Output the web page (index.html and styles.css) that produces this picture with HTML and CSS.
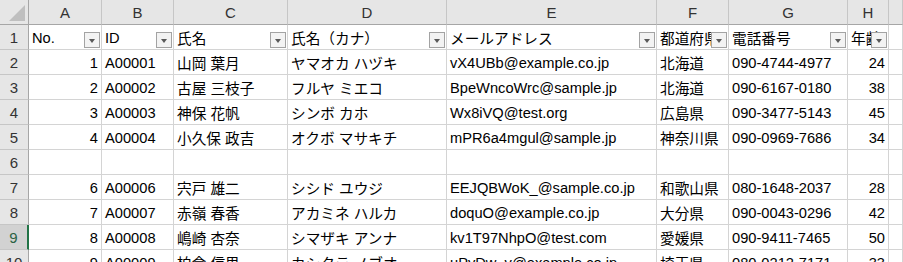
FILE: index.html
```html
<!DOCTYPE html>
<html lang="ja">
<head>
<meta charset="utf-8">
<title>Sheet</title>
<link rel="stylesheet" href="styles.css">
</head>
<body>
<div class="sheet">
  <div class="corner"><svg class="corner-tri" width="29" height="25" viewBox="0 0 29 25"><polygon points="25,5 25,21 9,21" fill="#bfbfbf"/></svg></div>
  <div class="ch">A</div><div class="ch">B</div><div class="ch">C</div><div class="ch">D</div><div class="ch">E</div><div class="ch">F</div><div class="ch">G</div><div class="ch">H</div><div class="ch"></div>

  <div class="rh">1</div>
  <div class="c flt">No.<span class="btn"></span></div>
  <div class="c flt">ID<span class="btn"></span></div>
  <div class="c flt">氏名<span class="btn"></span></div>
  <div class="c flt">氏名（カナ）<span class="btn"></span></div>
  <div class="c flt">メールアドレス<span class="btn"></span></div>
  <div class="c flt">都道府県<span class="btn"></span></div>
  <div class="c flt">電話番号<span class="btn"></span></div>
  <div class="c flt">年齢<span class="btn"></span></div>
  <div class="c"></div>

  <div class="rh">2</div>
  <div class="c num">1</div><div class="c">A00001</div><div class="c">山岡 葉月</div><div class="c">ヤマオカ ハヅキ</div><div class="c">vX4UBb@example.co.jp</div><div class="c">北海道</div><div class="c">090-4744-4977</div><div class="c num">24</div><div class="c"></div>

  <div class="rh">3</div>
  <div class="c num">2</div><div class="c">A00002</div><div class="c">古屋 三枝子</div><div class="c">フルヤ ミエコ</div><div class="c">BpeWncoWrc@sample.jp</div><div class="c">北海道</div><div class="c">090-6167-0180</div><div class="c num">38</div><div class="c"></div>

  <div class="rh">4</div>
  <div class="c num">3</div><div class="c">A00003</div><div class="c">神保 花帆</div><div class="c">シンボ カホ</div><div class="c">Wx8iVQ@test.org</div><div class="c">広島県</div><div class="c">090-3477-5143</div><div class="c num">45</div><div class="c"></div>

  <div class="rh">5</div>
  <div class="c num">4</div><div class="c">A00004</div><div class="c">小久保 政吉</div><div class="c">オクボ マサキチ</div><div class="c">mPR6a4mgul@sample.jp</div><div class="c">神奈川県</div><div class="c">090-0969-7686</div><div class="c num">34</div><div class="c"></div>

  <div class="rh">6</div>
  <div class="c"></div><div class="c"></div><div class="c"></div><div class="c"></div><div class="c"></div><div class="c"></div><div class="c"></div><div class="c"></div><div class="c"></div>

  <div class="rh">7</div>
  <div class="c num">6</div><div class="c">A00006</div><div class="c">宍戸 雄二</div><div class="c">シシド ユウジ</div><div class="c">EEJQBWoK_@sample.co.jp</div><div class="c">和歌山県</div><div class="c">080-1648-2037</div><div class="c num">28</div><div class="c"></div>

  <div class="rh">8</div>
  <div class="c num">7</div><div class="c">A00007</div><div class="c">赤嶺 春香</div><div class="c">アカミネ ハルカ</div><div class="c">doquO@example.co.jp</div><div class="c">大分県</div><div class="c">090-0043-0296</div><div class="c num">42</div><div class="c"></div>

  <div class="rh sel">9</div>
  <div class="c num">8</div><div class="c">A00008</div><div class="c">嶋崎 杏奈</div><div class="c">シマザキ アンナ</div><div class="c">kv1T97NhpO@test.com</div><div class="c">愛媛県</div><div class="c">090-9411-7465</div><div class="c num">50</div><div class="c"></div>

  <div class="rh">10</div>
  <div class="c num">9</div><div class="c">A00009</div><div class="c">柏倉 信男</div><div class="c">カシクラ ノブオ</div><div class="c">uPyDw_v@example.co.jp</div><div class="c">埼玉県</div><div class="c">080-0212-7171</div><div class="c num">33</div><div class="c"></div>
</div>
</body>
</html>
```

FILE: styles.css
```css
html, body {
  margin: 0;
  padding: 0;
  background: #ffffff;
  overflow: hidden;
}

.sheet {
  display: grid;
  grid-template-columns: 29px 73px 72px 114px 159px 210px 72px 119px 41px 1fr;
  grid-auto-rows: 25px;
  width: 903px;
  font-family: "Liberation Sans", "Noto Sans CJK JP", sans-serif;
  font-size: 14.67px;
  color: #000;
}

.corner {
  background: #e6e6e6;
  border-right: 1px solid #a6a6a6;
  border-bottom: 1px solid #a6a6a6;
  box-sizing: border-box;
  position: relative;
}

.corner-tri {
  display: block;
}

.ch {
  background: #e6e6e6;
  border-right: 1px solid #c6c6c6;
  border-bottom: 1px solid #a6a6a6;
  box-sizing: border-box;
  display: flex;
  align-items: center;
  justify-content: center;
  color: #333;
  font-size: 15px;
  padding-top: 1px;
}

.rh {
  background: #e6e6e6;
  border-right: 1px solid #a6a6a6;
  border-bottom: 1px solid #c6c6c6;
  box-sizing: border-box;
  display: flex;
  align-items: center;
  justify-content: center;
  color: #333;
  font-size: 15px;
  padding-top: 1px;
}

.rh.sel {
  background: #d2d2d2;
  border-right: 2px solid #217346;
  color: #2b6244;
}

.c {
  border-right: 1px solid #d4d4d4;
  border-bottom: 1px solid #d4d4d4;
  box-sizing: border-box;
  padding: 1px 3px 0 3px;
  display: flex;
  align-items: center;
  white-space: nowrap;
  overflow: hidden;
  position: relative;
}

.num {
  justify-content: flex-end;
}

.btn {
  position: absolute;
  right: 1px;
  bottom: 1px;
  width: 16px;
  height: 16px;
  box-sizing: border-box;
  border: 1px solid #a3a3a3;
  background: #f3f3f3;
}

.btn::after {
  content: "";
  position: absolute;
  left: 4px;
  top: 6px;
  border-left: 3.5px solid transparent;
  border-right: 3.5px solid transparent;
  border-top: 4px solid #595959;
}
```
